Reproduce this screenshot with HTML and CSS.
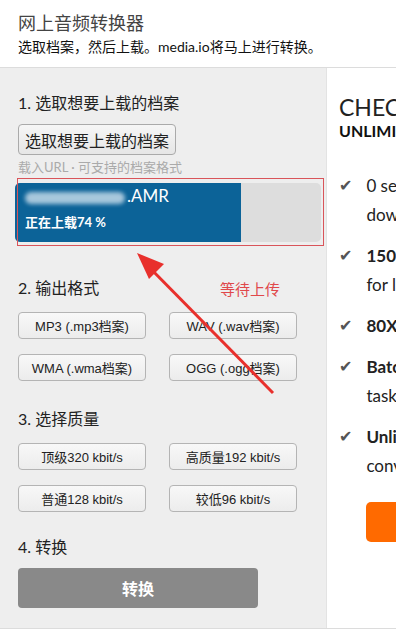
FILE: index.html
```html
<!DOCTYPE html>
<html lang="zh">
<head>
    <meta charset="UTF-8">
    <title>网上音频转换器</title>
    <link rel="stylesheet" href="styles.css">
</head>
<body>
    <div class="header">
        <h1>网上音频转换器</h1>
        <p>选取档案，然后上载。media.io将马上进行转换。</p>
    </div>

    <div class="main">
        <div class="converter">
            <h2>1. 选取想要上载的档案</h2>
            <button class="pick-btn">选取想要上载的档案</button>
            <div class="hint">载入URL · 可支持的档案格式</div>

            <div class="upload">
                <div class="progress">
                    <div class="progress-fill" style="width: 74%;">
                        <div class="file-name"><span class="blur"></span>.AMR</div>
                        <div class="file-status">正在上载74 %</div>
                    </div>
                </div>
            </div>

            <div class="step-row">
                <h2>2. 输出格式</h2>
                <span class="note">等待上传</span>
            </div>
            <div class="options formats">
                <button class="opt">MP3 (.mp3档案)</button>
                <button class="opt">WAV (.wav档案)</button>
                <button class="opt">WMA (.wma档案)</button>
                <button class="opt">OGG (.ogg档案)</button>
            </div>

            <h2>3. 选择质量</h2>
            <div class="options">
                <button class="opt">顶级320 kbit/s</button>
                <button class="opt">高质量192 kbit/s</button>
                <button class="opt">普通128 kbit/s</button>
                <button class="opt">较低96 kbit/s</button>
            </div>

            <h2>4. 转换</h2>
            <button class="convert-btn">转换</button>
        </div>

        <div class="premium">
            <div class="premium-title">CHECK OUT</div>
            <div class="premium-sub">UNLIMITED FEATURES</div>
            <ul class="features">
                <li><span class="tick">&#10004;</span><span>0 seconds waiting<br>download</span></li>
                <li><span class="tick">&#10004;</span><span><b>150MB</b> max file size<br>for large files</span></li>
                <li><span class="tick">&#10004;</span><span><b>80X</b> faster</span></li>
                <li><span class="tick">&#10004;</span><span><b>Batch</b> conversion<br>tasks</span></li>
                <li><span class="tick">&#10004;</span><span><b>Unlimited</b><br>conversions</span></li>
            </ul>
            <button class="go-btn">GO</button>
        </div>

        <!-- annotation arrow -->
        <svg class="arrow" width="396" height="632" viewBox="0 0 396 632">
            <line x1="273" y1="394" x2="145" y2="264" stroke="#e8302c" stroke-width="3"/>
            <polygon points="137,254 164,265 149,280" fill="#e8302c"/>
        </svg>
    </div>
</body>
</html>
```

FILE: styles.css
```css
body {
    margin: 0;
    width: 396px;
    height: 632px;
    overflow: hidden;
    background: #fff;
    font-family: Lato, "Noto Sans CJK SC", sans-serif;
    color: #222;
}

/* Header */
.header {
    height: 68px;
    padding: 0 0 0 18px;
    border-bottom: 1px solid #dcdcdc;
    box-sizing: border-box;
}

.header h1 {
    margin: 0;
    padding-top: 10px;
    font-size: 18px;
    font-weight: normal;
    line-height: 26px;
    color: #444;
}

.header p {
    margin: 0;
    font-size: 14px;
    line-height: 22px;
    color: #111;
}

.main {
    display: flex;
    position: relative;
    height: 560px;
    border-bottom: 1px solid #dcdcdc;
}

/* Left converter panel */
.converter {
    width: 326px;
    flex-shrink: 0;
    box-sizing: border-box;
    padding: 24px 0 0 18px;
    background: #eeeeee;
}

.converter h2 {
    margin: 0;
    font-size: 16px;
    font-weight: normal;
    line-height: 22px;
    color: #222;
}

.pick-btn {
    display: block;
    margin-top: 10px;
    height: 31px;
    padding: 0 6px;
    font-family: "Noto Sans CJK SC", sans-serif;
    font-size: 16px;
    color: #222;
    background: linear-gradient(#f6f6f6, #e6e6e6);
    border: 1px solid #aaa;
    border-radius: 4px;
}

.hint {
    margin-top: 3px;
    font-size: 13px;
    line-height: 18px;
    color: #aaa;
}

/* Upload progress */
.upload {
    position: relative;
    margin: 2px 0 0 -3px;
    width: 306px;
    padding: 5px 0 4px 0;
}

.upload::after {
    content: "";
    position: absolute;
    left: 2px;
    right: -3px;
    top: 0;
    bottom: 0;
    border: 1px solid #d9545a;
}

.progress {
    height: 59px;
    background: #dddddd;
    border-radius: 5px;
    overflow: hidden;
}

.progress-fill {
    height: 100%;
    background: #0c6398;
    color: #fff;
    box-sizing: border-box;
    padding: 2px 0 0 10px;
}

.file-name {
    font-size: 17px;
    line-height: 22px;
    white-space: nowrap;
}

.blur {
    display: inline-block;
    width: 100px;
    height: 12px;
    margin-right: 2px;
    vertical-align: middle;
    background: #cfe1ee;
    border-radius: 6px;
    filter: blur(2px);
    opacity: 0.8;
}

.file-status {
    margin-top: 6px;
    font-size: 13px;
    font-weight: bold;
    line-height: 18px;
}

/* Steps */
.step-row {
    display: flex;
    margin-top: 31px;
    width: 262px;
    justify-content: space-between;
    align-items: center;
}

.note {
    font-family: "Noto Sans CJK SC", sans-serif;
    font-size: 15px;
    color: #e0484b;
}

.options {
    display: grid;
    grid-template-columns: 128px 128px;
    column-gap: 23px;
    row-gap: 15px;
    margin: 13px 0 24px 0;
}

.options.formats {
    margin-bottom: 27px;
}

.opt {
    height: 27px;
    padding: 0;
    font-family: "Liberation Sans", "Noto Sans CJK SC", sans-serif;
    font-size: 13px;
    color: #222;
    background: linear-gradient(#f8f8f8, #ececec);
    border: 1px solid #b4b4b4;
    border-radius: 4px;
}

.convert-btn {
    display: block;
    margin-top: 10px;
    width: 240px;
    height: 40px;
    font-family: "Noto Sans CJK SC", sans-serif;
    font-size: 16px;
    font-weight: bold;
    color: #fff;
    background: #898989;
    border: none;
    border-radius: 4px;
}

/* Right premium panel */
.premium {
    flex: 1;
    overflow: hidden;
    white-space: nowrap;
    padding: 25px 0 0 12px;
    border-left: 1px solid #e3e3e3;
}

.premium-title {
    font-size: 23px;
    line-height: 28px;
    color: #222;
}

.premium-sub {
    font-size: 16px;
    font-weight: bold;
    line-height: 20px;
    color: #111;
}

.features {
    list-style: none;
    margin: 30px 0 0 0;
    padding: 0;
}

.features li {
    display: flex;
    gap: 14px;
    font-size: 17px;
    line-height: 29px;
    margin-bottom: 12px;
    color: #222;
}

.tick {
    font-family: "DejaVu Sans", sans-serif;
    font-size: 16px;
    color: #555;
}

.go-btn {
    display: block;
    margin: 22px 0 0 27px;
    width: 120px;
    height: 40px;
    background: #ff6a00;
    border: none;
    border-radius: 5px;
    color: #fff;
}

/* Annotation overlay */
.arrow {
    position: absolute;
    left: 0;
    top: -69px;
    pointer-events: none;
}
```
